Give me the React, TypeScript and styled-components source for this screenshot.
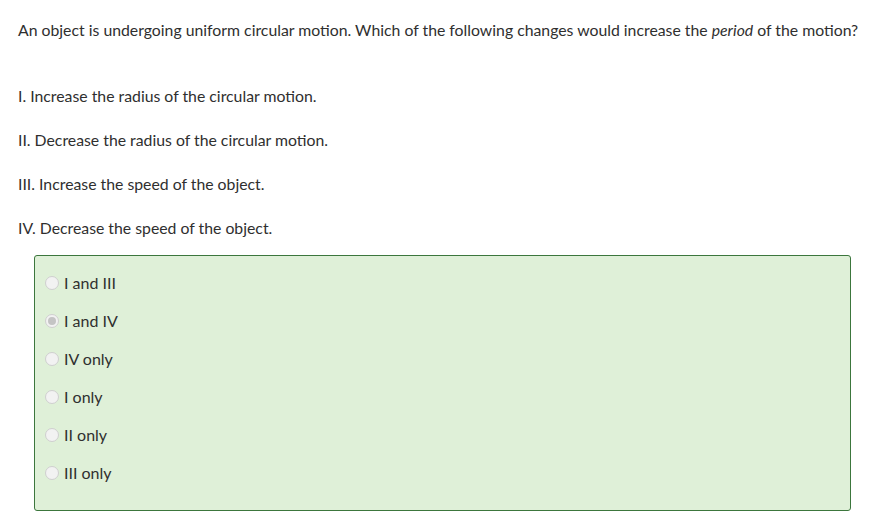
import React from "react";
import styled, { createGlobalStyle } from "styled-components";

const Global = createGlobalStyle`
  html, body { margin: 0; padding: 0; background: #fff; }
  body { font-family: Lato, "Open Sans", sans-serif; color: #2f2f2f; }
`;

const Page = styled.div`
  padding: 19px 8px 0 18px;
  font-size: 15.8px;
  line-height: 22px;
`;

const Question = styled.p`
  margin: 0 0 44px 0;
`;

const Statement = styled.p`
  margin: 0 0 22px 0;
`;

const Choices = styled.div`
  margin: -6px 13px 0 16px;
  background: #dff0d8;
  border: 1px solid #3c763d;
  border-radius: 3px;
  padding: 8px 0 18px 10px;
`;

const Row = styled.label`
  display: flex;
  align-items: center;
  gap: 5px;
  height: 38px;
  font-size: 16px;
`;

const Radio = styled.span<{ $checked?: boolean }>`
  box-sizing: border-box;
  width: 14px;
  height: 14px;
  border-radius: 50%;
  border: 1px solid #cfcfcf;
  background: #f2f2f2;
  display: flex;
  align-items: center;
  justify-content: center;
  &::after {
    content: "";
    display: ${(p) => (p.$checked ? "block" : "none")};
    width: 8px;
    height: 8px;
    border-radius: 50%;
    background: #c4c4c4;
  }
`;

const options = ["I and III", "I and IV", "IV only", "I only", "II only", "III only"];

export default function App() {
  return (
    <>
      <Global />
      <Page>
        <Question>
          An object is undergoing uniform circular motion. Which of the following changes would
          increase the <em>period</em> of the motion?
        </Question>
        <Statement>I. Increase the radius of the circular motion.</Statement>
        <Statement>II. Decrease the radius of the circular motion.</Statement>
        <Statement>III. Increase the speed of the object.</Statement>
        <Statement>IV. Decrease the speed of the object.</Statement>
        <Choices>
          {options.map((o, i) => (
            <Row key={o}>
              <Radio $checked={i === 1} />
              {o}
            </Row>
          ))}
        </Choices>
      </Page>
    </>
  );
}
